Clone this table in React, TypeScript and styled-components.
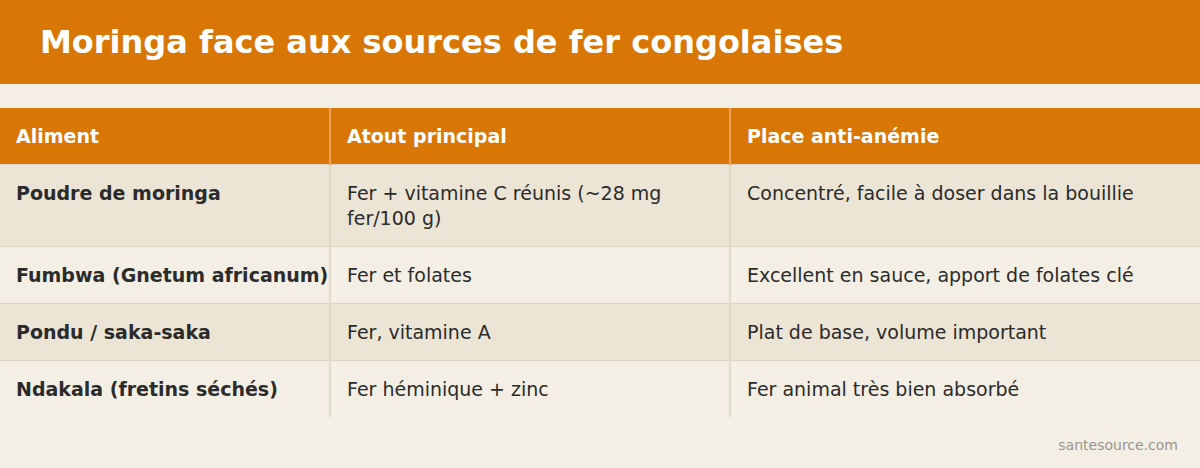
import React from 'react';
import styled, { createGlobalStyle } from 'styled-components';

const GlobalStyle = createGlobalStyle`
    html, body {
        margin: 0;
        padding: 0;
        background: #f4efe4;
    }
    * {
        box-sizing: border-box;
    }
`;

const Page = styled.div`
    width: 1200px;
    height: 468px;
    background: #f4efe4;
    font-family: 'DejaVu Sans', Verdana, sans-serif;
    color: #2b2b2b;
    display: flex;
    flex-direction: column;
`;

const TitleBar = styled.header`
    flex-shrink: 0;
    height: 84px;
    background: #d97706;
    display: flex;
    align-items: center;
    padding: 0 40px;
`;

const Title = styled.h1`
    margin: 0;
    font-size: 32px;
    font-weight: bold;
    color: #ffffff;
`;

const Table = styled.table`
    flex-shrink: 0;
    margin-top: 24px;
    width: 100%;
    border-collapse: collapse;
    table-layout: fixed;
`;

const HeadCell = styled.th<{ $width: number }>`
    width: ${props => props.$width}px;
    background: #d97706;
    color: #ffffff;
    font-size: 19px;
    font-weight: bold;
    text-align: left;
    line-height: 24px;
    padding: 16px;
    border-left: 2px solid #eaa159;
    &:first-child {
        border-left: 0;
    }
`;

const Row = styled.tr<{ $shaded: boolean }>`
    background: ${props => (props.$shaded ? '#ece4d5' : '#f4efe4')};
    border-top: 1px solid #e0d5c2;
`;

const Cell = styled.td<{ $strong?: boolean }>`
    font-size: 19px;
    font-weight: ${props => (props.$strong ? 'bold' : 'normal')};
    white-space: ${props => (props.$strong ? 'nowrap' : 'normal')};
    line-height: 24.6px;
    padding: 16px 16px 15.5px 16px;
    vertical-align: top;
    border-left: 2px solid #e2d8c5;
    &:first-child {
        border-left: 0;
    }
`;

const Footer = styled.div`
    margin-top: auto;
    padding: 0 22px 15px 0;
    text-align: right;
    font-size: 14px;
    color: #9a958c;
`;

const rows = [
    ['Poudre de moringa', 'Fer + vitamine C réunis (~28 mg fer/100 g)', 'Concentré, facile à doser dans la bouillie'],
    ['Fumbwa (Gnetum africanum)', 'Fer et folates', 'Excellent en sauce, apport de folates clé'],
    ['Pondu / saka-saka', 'Fer, vitamine A', 'Plat de base, volume important'],
    ['Ndakala (fretins séchés)', 'Fer héminique + zinc', 'Fer animal très bien absorbé'],
];

const App = () => (
    <Page>
        <GlobalStyle />
        <TitleBar>
            <Title>Moringa face aux sources de fer congolaises</Title>
        </TitleBar>
        <Table>
            <thead>
                <tr>
                    <HeadCell $width={330}>Aliment</HeadCell>
                    <HeadCell $width={400}>Atout principal</HeadCell>
                    <HeadCell $width={470}>Place anti-anémie</HeadCell>
                </tr>
            </thead>
            <tbody>
                {rows.map((row, i) => (
                    <Row key={row[0]} $shaded={i % 2 === 0}>
                        <Cell $strong>{row[0]}</Cell>
                        <Cell>{row[1]}</Cell>
                        <Cell>{row[2]}</Cell>
                    </Row>
                ))}
            </tbody>
        </Table>
        <Footer>santesource.com</Footer>
    </Page>
);

export default App;
